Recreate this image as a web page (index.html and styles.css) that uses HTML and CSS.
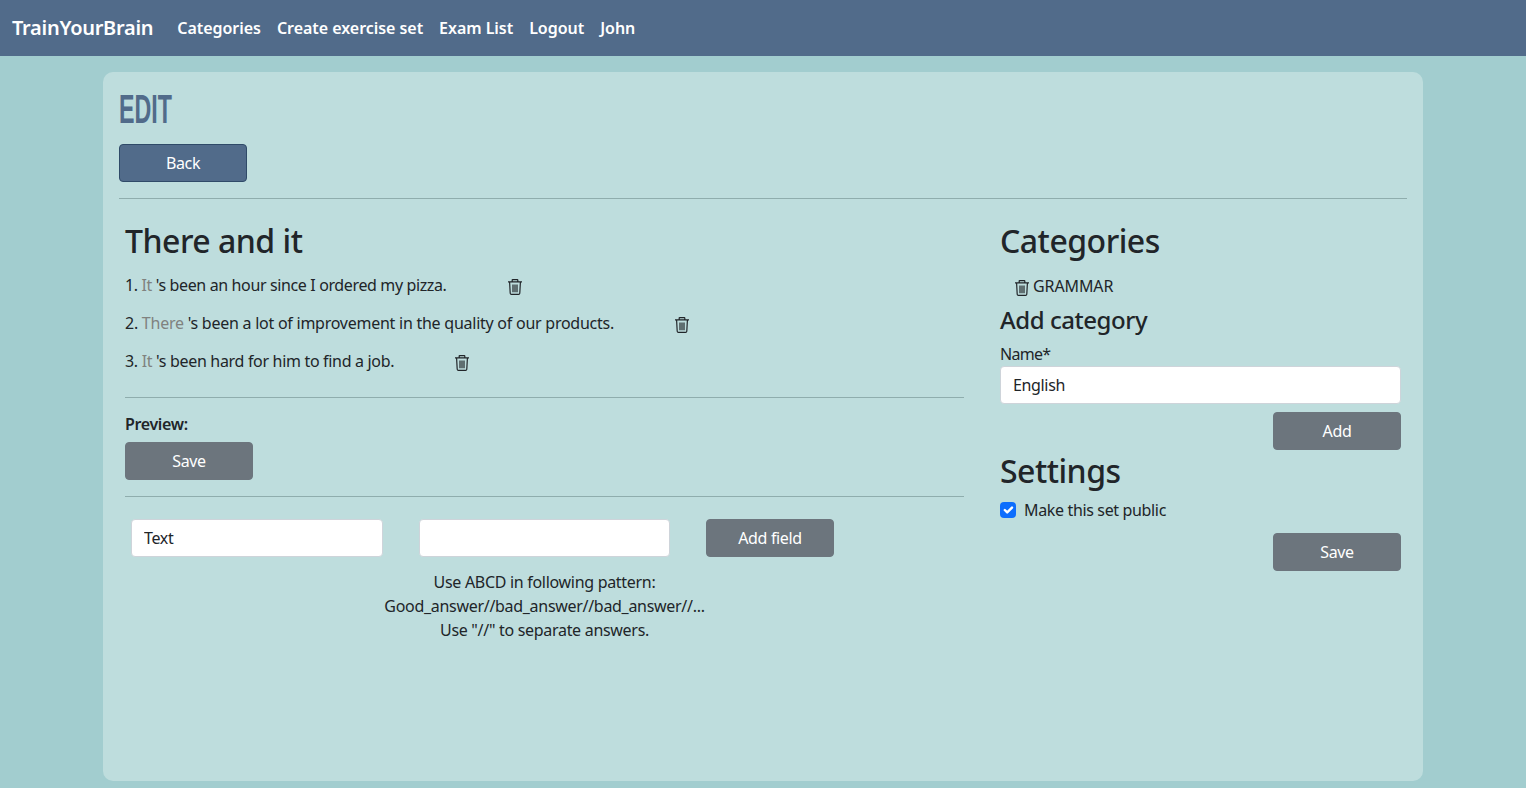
FILE: index.html
```html
<!DOCTYPE html>
<html lang="en">
<head>
    <meta charset="UTF-8">
    <title>TrainYourBrain</title>
    <link rel="stylesheet" href="styles.css">
</head>
<body>
    <!-- top bar -->
    <nav class="navbar">
        <a class="brand" href="#">TrainYourBrain</a>
        <a class="nav-link" href="#">Categories</a>
        <a class="nav-link" href="#">Create exercise set</a>
        <a class="nav-link" href="#">Exam List</a>
        <a class="nav-link" href="#">Logout</a>
        <a class="nav-link" href="#">John</a>
    </nav>

    <div class="card">
        <h1 class="title"><span>EDIT</span></h1>
        <button class="btn btn-back">Back</button>
        <hr class="line line-top">

        <div class="columns">
            <!-- exercise -->
            <div class="left">
                <h2 class="heading">There and it</h2>
                <div class="item item-first">
                    <span>1. <span class="word">It</span> 's been an hour since I ordered my pizza.</span>
                    <svg class="trash" viewBox="0 0 16 16"><use href="#trash-icon"></use></svg>
                </div>
                <div class="item item-second">
                    <span>2. <span class="word">There</span> 's been a lot of improvement in the quality of our products.</span>
                    <svg class="trash" viewBox="0 0 16 16"><use href="#trash-icon"></use></svg>
                </div>
                <div class="item item-third">
                    <span>3. <span class="word">It</span> 's been hard for him to find a job.</span>
                    <svg class="trash" viewBox="0 0 16 16"><use href="#trash-icon"></use></svg>
                </div>
                <hr class="line line-list">
                <div class="preview">Preview:</div>
                <button class="btn btn-gray">Save</button>
                <hr class="line line-preview">
                <div class="field-row">
                    <input class="input input-type" type="text" value="Text">
                    <div class="field-col">
                        <input class="input input-value" type="text">
                        <div class="hint">
                            Use ABCD in following pattern:<br>
                            Good_answer//bad_answer//bad_answer//...<br>
                            Use "//" to separate answers.
                        </div>
                    </div>
                    <button class="btn btn-gray">Add field</button>
                </div>
            </div>

            <!-- side -->
            <div class="right">
                <h2 class="heading">Categories</h2>
                <div class="category">
                    <svg class="trash" viewBox="0 0 16 16"><use href="#trash-icon"></use></svg>
                    <span>GRAMMAR</span>
                </div>
                <h4 class="sub-heading">Add category</h4>
                <label class="label">Name*</label>
                <input class="input input-name" type="text" value="English">
                <div class="actions"><button class="btn btn-gray">Add</button></div>
                <h2 class="heading heading-settings">Settings</h2>
                <label class="check">
                    <span class="checkbox">
                        <svg viewBox="0 0 20 20"><path fill="none" stroke="#fff" stroke-linecap="round" stroke-linejoin="round" stroke-width="3" d="M6 10l3 3 6-6"/></svg>
                    </span>
                    Make this set public
                </label>
                <div class="actions actions-save"><button class="btn btn-gray">Save</button></div>
            </div>
        </div>
    </div>

    <svg class="icon-defs" aria-hidden="true">
        <symbol id="trash-icon" viewBox="0 0 16 16">
            <path fill="none" stroke="currentColor" stroke-width="1.2" d="M5.2 2.600V1.100c0-.3.2-.5.5-.5h4.600c.3 0 .5.2.5.5v1.500M1 2.900h14M2.600 3l.6 11.200c.1.8.5 1.200 1.200 1.200h7.200c.7 0 1.100-.4 1.200-1.200L13.400 3M6 5.500v7.700M8 5.500v7.700M10 5.500v7.700"/>
        </symbol>
    </svg>
</body>
</html>
```
FILE: styles.css
```css
* {
    box-sizing: border-box;
}

body {
    margin: 0;
    height: 788px;
    overflow: hidden;
    background-color: #a2cdcf;
    color: #212529;
    font: 16px/24px "Noto Sans", sans-serif;
    letter-spacing: -0.35px;
}

.navbar {
    display: flex;
    align-items: center;
    height: 56px;
    padding: 0 12px;
    background-color: #516b8a;
}

.brand {
    margin-right: 16px;
    color: #fff;
    font-size: 20px;
    font-weight: 600;
    line-height: 30px;
    letter-spacing: -0.28px;
    text-decoration: none;
}

.nav-link {
    padding: 8px;
    color: #fff;
    font-weight: 600;
    letter-spacing: -0.04px;
    text-decoration: none;
}

.card {
    width: 1320px;
    height: 709px;
    margin: 16px auto 0;
    padding: 16px;
    background-color: #bedddd;
    border-radius: 10px;
}

.title {
    height: 48px;
    margin: 0 0 8px;
    color: #516b8a;
    font: bold 40px/42px "Liberation Sans", sans-serif;
    letter-spacing: 0;
}

.title span {
    display: inline-block;
    transform: scaleX(0.58);
    transform-origin: left center;
}

.btn {
    display: block;
    width: 128px;
    height: 38px;
    padding: 0;
    border: 1px solid #6c757d;
    border-radius: 4px;
    background-color: #6c757d;
    color: #fff;
    font: inherit;
    letter-spacing: inherit;
}

.btn-back {
    background-color: #516b8a;
    border-color: #2f4a68;
}

.line {
    margin: 16px 0;
    border: 0;
    border-top: 1px solid #8fadad;
}

.columns {
    display: flex;
    gap: 36px;
    padding: 7px 6px 0;
}

.left {
    width: 839px;
}

.right {
    width: 401px;
}

.heading {
    margin: 0 0 6px;
    font-size: 32px;
    font-weight: 540;
    line-height: 38px;
    letter-spacing: -0.5px;
}

.item {
    display: flex;
    align-items: center;
    gap: 60px;
    height: 38px;
}

.item-first {
    letter-spacing: -0.37px;
}

.item-second {
    letter-spacing: -0.25px;
}

.item-third {
    letter-spacing: -0.32px;
}

.word {
    color: #80827f;
}

.trash {
    width: 16px;
    height: 16px;
    margin-top: 4px;
    flex: none;
}

.icon-defs {
    display: none;
}

.line-list {
    margin: 17px 0 14px;
}

.preview {
    font-weight: 600;
    margin-bottom: 6px;
}

.line-preview {
    margin: 16px 0 22px;
}

.field-row {
    display: flex;
    align-items: flex-start;
    padding-left: 6px;
}

.input {
    display: block;
    height: 38px;
    padding: 6px 12px;
    border: 1px solid #ced4da;
    border-radius: 4px;
    background-color: #fff;
    color: #212529;
    font: inherit;
    letter-spacing: inherit;
}

.input-type {
    width: 252px;
    margin-right: 36px;
}

.input-value {
    width: 251px;
    margin-bottom: 13px;
}

.field-col {
    width: 251px;
    margin-right: 36px;
}

.hint {
    width: 400px;
    margin-left: -74.5px;
    letter-spacing: -0.3px;
    text-align: center;
}

.category {
    display: flex;
    align-items: center;
    gap: 3px;
    height: 24px;
    margin: 14px 0 7px;
    padding-left: 14px;
    letter-spacing: -0.1px;
}

.category .trash {
    margin-top: 3px;
}

.sub-heading {
    margin: 0 0 8px;
    font-size: 24px;
    font-weight: 540;
    line-height: 29px;
    letter-spacing: -0.45px;
}

.label {
    display: block;
    margin-bottom: 0;
    letter-spacing: -0.7px;
}

.input-name {
    width: 100%;
}

.actions {
    display: flex;
    justify-content: flex-end;
    margin-top: 8px;
}

.heading-settings {
    margin: 2px 0 8px;
}

.check {
    display: flex;
    align-items: center;
    gap: 8px;
}

.checkbox {
    display: block;
    width: 16px;
    height: 16px;
    border-radius: 4px;
    background-color: #0d6efd;
}

.checkbox svg {
    display: block;
}

.actions-save {
    margin-top: 11px;
}
```
